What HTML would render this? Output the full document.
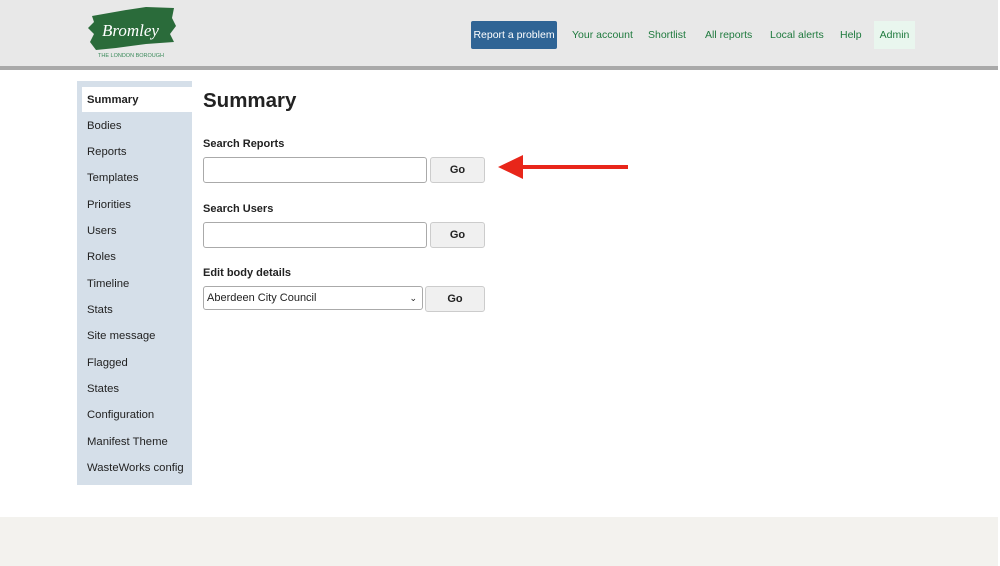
<!DOCTYPE html>
<html><head><style>
body{margin:0;width:1000px;height:566px;position:relative;background:#fff;font-family:"Liberation Sans",Arial,sans-serif;overflow:hidden}
.hdr{position:absolute;left:0;top:0;width:998px;height:66px;background:#e8e8e8}
.bar{position:absolute;left:0;top:66px;width:998px;height:4px;background:#a9a9a9}
.nav a{position:absolute;top:21px;height:28px;line-height:28px;font-size:10.5px;color:#1f7a3e;text-decoration:none}
.side{position:absolute;left:77px;top:81px;width:115px;height:404px;background:#d5dfe9}
.side div{position:absolute;left:10px;font-size:11.3px;color:#222}
.lbl{position:absolute;left:203px;font-size:11px;font-weight:bold;color:#222}
.inp{position:absolute;left:203px;width:222px;height:24px;border:1px solid #aaa;border-radius:3px;background:#fff}
.btn{position:absolute;width:53px;height:24px;border:1px solid #ccc;border-radius:3px;background:#f0f0f0;font-size:11px;font-weight:bold;text-align:center;line-height:24px;color:#222}
.foot{position:absolute;left:0;top:517px;width:998px;height:49px;background:#f3f2ee}
</style></head><body>
<div class="hdr"></div><div class="bar"></div>
<svg style="position:absolute;left:86px;top:4px" width="92" height="56">
<path d="M6 12 L40 6 L60 3 L88 4 L86 14 L90 22 L84 30 L88 38 L60 40 L30 44 L10 46 L4 38 L8 30 L2 24 L8 18Z" fill="#2a6b3a"/>
<text x="16" y="32" fill="#fff" font-family="Liberation Serif,serif" font-style="italic" font-size="17">Bromley</text>
<text x="12" y="53" fill="#3a8a5a" font-size="5.5">THE LONDON BOROUGH</text>
</svg>
<div class="nav">
<a style="left:471px;width:86px;top:21px;background:#2f6495;color:#fff;border-radius:2px;text-align:center;height:28px">Report a problem</a>
<a style="left:572px">Your account</a>
<a style="left:648px">Shortlist</a>
<a style="left:705px">All reports</a>
<a style="left:770px">Local alerts</a>
<a style="left:840px">Help</a>
<a style="left:874px;width:41px;background:#e9f6ee;text-align:center">Admin</a>
</div>
<div class="side">
<div style="left:5px;top:6px;width:110px;height:25px;background:#fff"></div>
<div style="top:13px;font-weight:bold">Summary</div>
<div style="top:39px">Bodies</div>
<div style="top:65px">Reports</div>
<div style="top:91px">Templates</div>
<div style="top:118px">Priorities</div>
<div style="top:144px">Users</div>
<div style="top:170px">Roles</div>
<div style="top:197px">Timeline</div>
<div style="top:223px">Stats</div>
<div style="top:249px">Site message</div>
<div style="top:276px">Flagged</div>
<div style="top:302px">States</div>
<div style="top:328px">Configuration</div>
<div style="top:355px">Manifest Theme</div>
<div style="top:381px">WasteWorks config</div>
</div>
<div style="position:absolute;left:203px;top:89px;font-size:20.5px;font-weight:bold;color:#222">Summary</div>
<div class="lbl" style="top:138px">Search Reports</div>
<div class="inp" style="top:157px"></div><div class="btn" style="left:430px;top:157px">Go</div>
<div class="lbl" style="top:203px">Search Users</div>
<div class="inp" style="top:222px"></div><div class="btn" style="left:430px;top:222px">Go</div>
<div class="lbl" style="top:267px">Edit body details</div>
<div style="position:absolute;left:203px;top:286px;width:215px;height:22px;border:1px solid #aaa;border-radius:3px;font-size:11px;line-height:22px;padding-left:3px;color:#222">Aberdeen City Council<span style="position:absolute;right:5px;font-size:9px">⌄</span></div>
<div class="btn" style="left:425px;top:286px;width:58px">Go</div>
<svg style="position:absolute;left:495px;top:152px" width="140" height="32">
<line x1="20" y1="15" x2="133" y2="15" stroke="#e8261a" stroke-width="4"/>
<path d="M3 15 L28 3 L28 27Z" fill="#e8261a"/></svg>
<div class="foot"></div>
</body></html>
